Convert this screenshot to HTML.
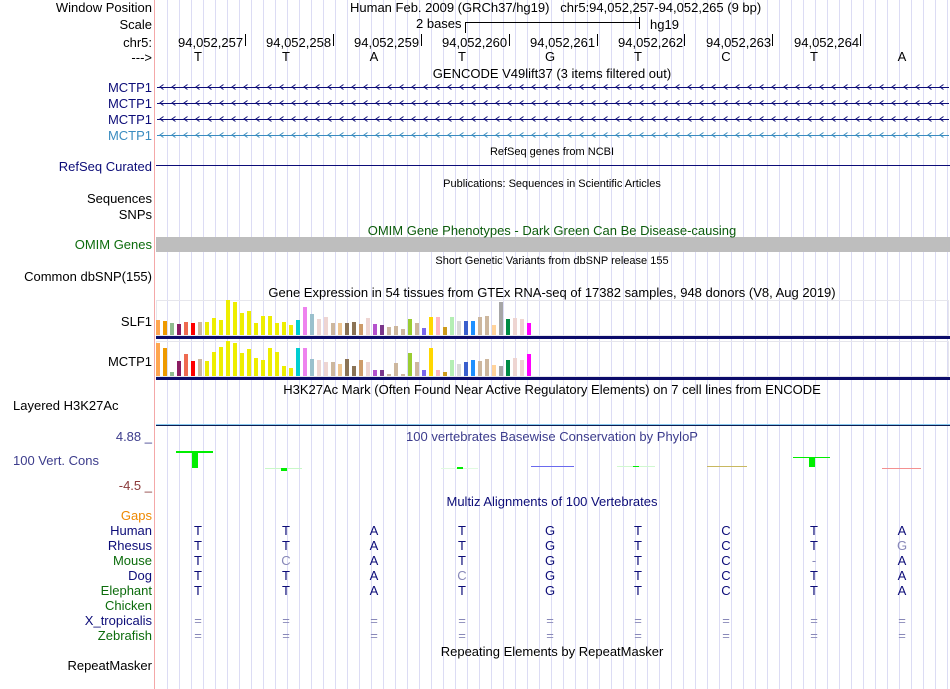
<!DOCTYPE html>
<html><head><meta charset="utf-8"><style>
body{margin:0;width:950px;height:689px;background:#fff;position:relative;overflow:hidden;font-family:"Liberation Sans",sans-serif;font-size:13px;color:#000}
.l{position:absolute;right:798px;white-space:nowrap;text-align:right;line-height:15px}
.t{position:absolute;white-space:nowrap;line-height:15px}
.c{position:absolute;white-space:nowrap;line-height:15px;transform:translateX(-50%)}
svg{position:absolute;left:0;top:0}
</style></head><body>
<svg width="950" height="689">
<defs>
<pattern id="g" x="167" y="0" width="12" height="689" patternUnits="userSpaceOnUse"><rect x="0" y="0" width="1" height="689" fill="#dcdcf4"/></pattern>
<pattern id="ch" x="158" y="79" width="12" height="16" patternUnits="userSpaceOnUse"><path d="M5.5 5.5 L2 8 L5.5 10.5" fill="none" stroke="#0c0c78" stroke-width="1"/></pattern>
<pattern id="ch2" x="158" y="79" width="12" height="16" patternUnits="userSpaceOnUse"><path d="M5.5 5.5 L2 8 L5.5 10.5" fill="none" stroke="#3a8cc0" stroke-width="1"/></pattern>
</defs>
<rect x="156" y="0" width="794" height="689" fill="url(#g)"/>
<rect x="154" y="0" width="1" height="689" fill="#f4a8a8"/>
<rect x="465" y="22" width="1" height="11" fill="#000"/><rect x="465" y="22" width="174" height="1" fill="#000"/><rect x="639" y="17" width="1" height="12" fill="#000"/>
<g fill="#000"><rect x="245" y="34" width="1" height="12"/><rect x="333" y="34" width="1" height="12"/><rect x="421" y="34" width="1" height="12"/><rect x="509" y="34" width="1" height="12"/><rect x="597" y="34" width="1" height="12"/><rect x="684" y="34" width="1" height="12"/><rect x="772" y="34" width="1" height="12"/><rect x="860" y="34" width="1" height="12"/></g>
<rect x="157" y="87" width="792" height="1" fill="#0c0c78"/>
<rect x="157" y="103" width="792" height="1" fill="#0c0c78"/>
<rect x="157" y="119" width="792" height="1" fill="#0c0c78"/>
<rect x="156" y="80" width="794" height="47" fill="url(#ch)"/>
<rect x="157" y="135" width="792" height="1" fill="#3a8cc0"/>
<rect x="156" y="128" width="794" height="14" fill="url(#ch2)"/>
<rect x="156" y="165" width="794" height="1" fill="#0c0c78"/>
<rect x="156" y="237" width="794" height="15" fill="#bebebe"/>
<rect x="156.5" y="300.5" width="792" height="35" fill="none" stroke="#e6e6ec"/>
<rect x="156.5" y="341.5" width="792" height="35" fill="none" stroke="#e6e6ec"/>
<rect x="156" y="336" width="794" height="3" fill="#0c0c6a"/>
<rect x="156" y="377" width="794" height="3" fill="#0c0c6a"/>
<g>
<rect x="156" y="320" width="4" height="15" fill="#FFA54F"/><rect x="163" y="321" width="4" height="14" fill="#EE9A00"/><rect x="170" y="323" width="4" height="12" fill="#8FBC8F"/><rect x="177" y="324" width="4" height="11" fill="#8B1C62"/><rect x="184" y="322" width="4" height="13" fill="#EE6A50"/><rect x="191" y="323" width="4" height="12" fill="#FF0000"/><rect x="198" y="322" width="4" height="13" fill="#CDB79E"/><rect x="205" y="322" width="4" height="13" fill="#EEEE00"/><rect x="212" y="318" width="4" height="17" fill="#EEEE00"/><rect x="219" y="320" width="4" height="15" fill="#EEEE00"/><rect x="226" y="300" width="4" height="35" fill="#EEEE00"/><rect x="233" y="302" width="4" height="33" fill="#EEEE00"/><rect x="240" y="313" width="4" height="22" fill="#EEEE00"/><rect x="247" y="311" width="4" height="24" fill="#EEEE00"/><rect x="254" y="323" width="4" height="12" fill="#EEEE00"/><rect x="261" y="316" width="4" height="19" fill="#EEEE00"/><rect x="268" y="316" width="4" height="19" fill="#EEEE00"/><rect x="275" y="323" width="4" height="12" fill="#EEEE00"/><rect x="282" y="322" width="4" height="13" fill="#EEEE00"/><rect x="289" y="325" width="4" height="10" fill="#EEEE00"/><rect x="296" y="320" width="4" height="15" fill="#00CED1"/><rect x="303" y="307" width="4" height="28" fill="#EE82EE"/><rect x="310" y="314" width="4" height="21" fill="#9AC0CD"/><rect x="317" y="319" width="4" height="16" fill="#EED5D2"/><rect x="324" y="317" width="4" height="18" fill="#EED5D2"/><rect x="331" y="323" width="4" height="12" fill="#CDB79E"/><rect x="338" y="323" width="4" height="12" fill="#EEC591"/><rect x="345" y="323" width="4" height="12" fill="#8B7355"/><rect x="352" y="322" width="4" height="13" fill="#8B7355"/><rect x="359" y="324" width="4" height="11" fill="#CD9B69"/><rect x="366" y="318" width="4" height="17" fill="#EED5D2"/><rect x="373" y="324" width="4" height="11" fill="#B452CD"/><rect x="380" y="325" width="4" height="10" fill="#7A378B"/><rect x="387" y="327" width="4" height="8" fill="#CDB79E"/><rect x="394" y="326" width="4" height="9" fill="#CDB79E"/><rect x="401" y="329" width="4" height="6" fill="#CDB79E"/><rect x="408" y="319" width="4" height="16" fill="#9ACD32"/><rect x="415" y="323" width="4" height="12" fill="#CDB79E"/><rect x="422" y="328" width="4" height="7" fill="#7B68EE"/><rect x="429" y="317" width="4" height="18" fill="#FFD700"/><rect x="436" y="317" width="4" height="18" fill="#FFB6C1"/><rect x="443" y="327" width="4" height="8" fill="#CD9B1D"/><rect x="450" y="317" width="4" height="18" fill="#B4EEB4"/><rect x="457" y="321" width="4" height="14" fill="#D9D9D9"/><rect x="464" y="321" width="4" height="14" fill="#3A5FCD"/><rect x="471" y="321" width="4" height="14" fill="#1E90FF"/><rect x="478" y="317" width="4" height="18" fill="#CDB79E"/><rect x="485" y="316" width="4" height="19" fill="#CDB79E"/><rect x="492" y="325" width="4" height="10" fill="#FFD39B"/><rect x="499" y="302" width="4" height="33" fill="#A6A6A6"/><rect x="506" y="319" width="4" height="16" fill="#008B45"/><rect x="513" y="318" width="4" height="17" fill="#EED5D2"/><rect x="520" y="319" width="4" height="16" fill="#EED5D2"/><rect x="527" y="323" width="4" height="12" fill="#FF00FF"/>
</g>
<g>
<rect x="156" y="343" width="4" height="33" fill="#FFA54F"/><rect x="163" y="348" width="4" height="28" fill="#EE9A00"/><rect x="170" y="372" width="4" height="4" fill="#8FBC8F"/><rect x="177" y="361" width="4" height="15" fill="#8B1C62"/><rect x="184" y="354" width="4" height="22" fill="#EE6A50"/><rect x="191" y="361" width="4" height="15" fill="#FF0000"/><rect x="198" y="359" width="4" height="17" fill="#CDB79E"/><rect x="205" y="361" width="4" height="15" fill="#EEEE00"/><rect x="212" y="352" width="4" height="24" fill="#EEEE00"/><rect x="219" y="347" width="4" height="29" fill="#EEEE00"/><rect x="226" y="341" width="4" height="35" fill="#EEEE00"/><rect x="233" y="343" width="4" height="33" fill="#EEEE00"/><rect x="240" y="353" width="4" height="23" fill="#EEEE00"/><rect x="247" y="349" width="4" height="27" fill="#EEEE00"/><rect x="254" y="358" width="4" height="18" fill="#EEEE00"/><rect x="261" y="360" width="4" height="16" fill="#EEEE00"/><rect x="268" y="348" width="4" height="28" fill="#EEEE00"/><rect x="275" y="352" width="4" height="24" fill="#EEEE00"/><rect x="282" y="366" width="4" height="10" fill="#EEEE00"/><rect x="289" y="368" width="4" height="8" fill="#EEEE00"/><rect x="296" y="348" width="4" height="28" fill="#00CED1"/><rect x="303" y="348" width="4" height="28" fill="#EE82EE"/><rect x="310" y="359" width="4" height="17" fill="#9AC0CD"/><rect x="317" y="360" width="4" height="16" fill="#EED5D2"/><rect x="324" y="362" width="4" height="14" fill="#EED5D2"/><rect x="331" y="362" width="4" height="14" fill="#CDB79E"/><rect x="338" y="364" width="4" height="12" fill="#EEC591"/><rect x="345" y="359" width="4" height="17" fill="#8B7355"/><rect x="352" y="366" width="4" height="10" fill="#8B7355"/><rect x="359" y="360" width="4" height="16" fill="#CD9B69"/><rect x="366" y="362" width="4" height="14" fill="#EED5D2"/><rect x="373" y="370" width="4" height="6" fill="#B452CD"/><rect x="380" y="370" width="4" height="6" fill="#7A378B"/><rect x="387" y="374" width="4" height="2" fill="#CDB79E"/><rect x="394" y="363" width="4" height="13" fill="#CDB79E"/><rect x="401" y="374" width="4" height="2" fill="#CDB79E"/><rect x="408" y="353" width="4" height="23" fill="#9ACD32"/><rect x="415" y="362" width="4" height="14" fill="#CDB79E"/><rect x="422" y="370" width="4" height="6" fill="#7B68EE"/><rect x="429" y="348" width="4" height="28" fill="#FFD700"/><rect x="436" y="370" width="4" height="6" fill="#FFB6C1"/><rect x="443" y="372" width="4" height="4" fill="#CD9B1D"/><rect x="450" y="360" width="4" height="16" fill="#B4EEB4"/><rect x="457" y="364" width="4" height="12" fill="#D9D9D9"/><rect x="464" y="362" width="4" height="14" fill="#3A5FCD"/><rect x="471" y="360" width="4" height="16" fill="#1E90FF"/><rect x="478" y="361" width="4" height="15" fill="#CDB79E"/><rect x="485" y="359" width="4" height="17" fill="#CDB79E"/><rect x="492" y="365" width="4" height="11" fill="#FFD39B"/><rect x="499" y="366" width="4" height="10" fill="#A6A6A6"/><rect x="506" y="360" width="4" height="16" fill="#008B45"/><rect x="513" y="358" width="4" height="18" fill="#EED5D2"/><rect x="520" y="360" width="4" height="16" fill="#EED5D2"/><rect x="527" y="354" width="4" height="22" fill="#FF00FF"/>
</g>
<rect x="156" y="424" width="794" height="1" fill="#87c8ee"/>
<rect x="156" y="425" width="794" height="1" fill="#0c1c50"/>
<rect x="176" y="451" width="37" height="2" fill="#00ee00"/><rect x="192" y="452" width="6" height="16" fill="#00ee00"/>
<rect x="265" y="468" width="37" height="1" fill="#c8f8c8"/><rect x="281" y="468" width="6" height="3" fill="#00ee00"/>
<rect x="441" y="468" width="37" height="1" fill="#e0fae0"/><rect x="457" y="467" width="6" height="2" fill="#00ee00"/>
<rect x="531" y="466" width="43" height="1" fill="#6a6aee"/>
<rect x="617" y="466" width="38" height="1" fill="#d0f8d0"/><rect x="633" y="466" width="6" height="1" fill="#00ee00"/>
<rect x="707" y="466" width="40" height="1" fill="#c8b860"/>
<rect x="793" y="457" width="37" height="1" fill="#00ee00"/><rect x="809" y="457" width="6" height="10" fill="#00ee00"/>
<rect x="882" y="468" width="39" height="1" fill="#f49090"/>
</svg>

<div class="l" style="top:0">Window Position</div>
<div class="l" style="top:17px">Scale</div>
<div class="l" style="top:35px">chr5:</div>
<div class="l" style="top:50px">---&gt;</div>
<div class="t" style="left:350px;top:0">Human Feb. 2009 (GRCh37/hg19) &nbsp; chr5:94,052,257-94,052,265 (9 bp)</div>
<div class="t" style="left:416px;top:16px">2 bases</div>
<div class="t" style="left:650px;top:17px">hg19</div>
<div class="t" style="left:178px;top:35px">94,052,257</div>
<div class="t" style="left:266px;top:35px">94,052,258</div>
<div class="t" style="left:354px;top:35px">94,052,259</div>
<div class="t" style="left:442px;top:35px">94,052,260</div>
<div class="t" style="left:530px;top:35px">94,052,261</div>
<div class="t" style="left:618px;top:35px">94,052,262</div>
<div class="t" style="left:706px;top:35px">94,052,263</div>
<div class="t" style="left:794px;top:35px">94,052,264</div>
<div class="c" style="left:198px;top:49px">T</div><div class="c" style="left:286px;top:49px">T</div><div class="c" style="left:374px;top:49px">A</div><div class="c" style="left:462px;top:49px">T</div><div class="c" style="left:550px;top:49px">G</div><div class="c" style="left:638px;top:49px">T</div><div class="c" style="left:726px;top:49px">C</div><div class="c" style="left:814px;top:49px">T</div><div class="c" style="left:902px;top:49px">A</div>
<div class="c" style="left:552px;top:66px">GENCODE V49lift37 (3 items filtered out)</div>
<div class="l" style="top:80px;color:#0c0c78">MCTP1</div>
<div class="l" style="top:96px;color:#0c0c78">MCTP1</div>
<div class="l" style="top:112px;color:#0c0c78">MCTP1</div>
<div class="l" style="top:128px;color:#3a8cc0">MCTP1</div>
<div class="c" style="left:552px;top:145px;font-size:11px">RefSeq genes from NCBI</div>
<div class="l" style="top:159px;color:#0c0c78">RefSeq Curated</div>
<div class="c" style="left:552px;top:177px;font-size:11px">Publications: Sequences in Scientific Articles</div>
<div class="l" style="top:191px">Sequences</div>
<div class="l" style="top:207px">SNPs</div>
<div class="c" style="left:552px;top:223px;color:#0c5c0c">OMIM Gene Phenotypes - Dark Green Can Be Disease-causing</div>
<div class="l" style="top:237px;color:#0c6c0c">OMIM Genes</div>
<div class="c" style="left:552px;top:254px;font-size:11px">Short Genetic Variants from dbSNP release 155</div>
<div class="l" style="top:269px">Common dbSNP(155)</div>
<div class="c" style="left:552px;top:285px">Gene Expression in 54 tissues from GTEx RNA-seq of 17382 samples, 948 donors (V8, Aug 2019)</div>
<div class="l" style="top:314px">SLF1</div>
<div class="l" style="top:354px">MCTP1</div>
<div class="c" style="left:552px;top:382px">H3K27Ac Mark (Often Found Near Active Regulatory Elements) on 7 cell lines from ENCODE</div>
<div class="t" style="left:13px;top:398px">Layered H3K27Ac</div>
<div class="l" style="top:429px;color:#3c3c8c">4.88 _</div>
<div class="c" style="left:552px;top:429px;color:#3c3c8c">100 vertebrates Basewise Conservation by PhyloP</div>
<div class="t" style="left:13px;top:453px;color:#3c3c8c">100 Vert. Cons</div>
<div class="l" style="top:478px;color:#8b3a3a">-4.5 _</div>
<div class="c" style="left:552px;top:494px;color:#0c0c78">Multiz Alignments of 100 Vertebrates</div>
<div class="l" style="top:508px;color:#ee8800">Gaps</div>
<div class="l" style="top:523px;color:#0c0c78">Human</div>
<div class="l" style="top:538px;color:#0c0c78">Rhesus</div>
<div class="l" style="top:553px;color:#0c6c0c">Mouse</div>
<div class="l" style="top:568px;color:#0c0c78">Dog</div>
<div class="l" style="top:583px;color:#0c6c0c">Elephant</div>
<div class="l" style="top:598px;color:#0c6c0c">Chicken</div>
<div class="l" style="top:613px;color:#0c0c78">X_tropicalis</div>
<div class="l" style="top:628px;color:#0c6c0c">Zebrafish</div>
<div style="color:#0c0c78">
<div class="c" style="left:198px;top:523px">T</div><div class="c" style="left:286px;top:523px">T</div><div class="c" style="left:374px;top:523px">A</div><div class="c" style="left:462px;top:523px">T</div><div class="c" style="left:550px;top:523px">G</div><div class="c" style="left:638px;top:523px">T</div><div class="c" style="left:726px;top:523px">C</div><div class="c" style="left:814px;top:523px">T</div><div class="c" style="left:902px;top:523px">A</div>
<div class="c" style="left:198px;top:538px">T</div><div class="c" style="left:286px;top:538px">T</div><div class="c" style="left:374px;top:538px">A</div><div class="c" style="left:462px;top:538px">T</div><div class="c" style="left:550px;top:538px">G</div><div class="c" style="left:638px;top:538px">T</div><div class="c" style="left:726px;top:538px">C</div><div class="c" style="left:814px;top:538px">T</div><div class="c" style="left:902px;top:538px;color:#8888b8">G</div>
<div class="c" style="left:198px;top:553px">T</div><div class="c" style="left:286px;top:553px;color:#8888b8">C</div><div class="c" style="left:374px;top:553px">A</div><div class="c" style="left:462px;top:553px">T</div><div class="c" style="left:550px;top:553px">G</div><div class="c" style="left:638px;top:553px">T</div><div class="c" style="left:726px;top:553px">C</div><div class="c" style="left:814px;top:553px;color:#8888b8">-</div><div class="c" style="left:902px;top:553px">A</div>
<div class="c" style="left:198px;top:568px">T</div><div class="c" style="left:286px;top:568px">T</div><div class="c" style="left:374px;top:568px">A</div><div class="c" style="left:462px;top:568px;color:#8888b8">C</div><div class="c" style="left:550px;top:568px">G</div><div class="c" style="left:638px;top:568px">T</div><div class="c" style="left:726px;top:568px">C</div><div class="c" style="left:814px;top:568px">T</div><div class="c" style="left:902px;top:568px">A</div>
<div class="c" style="left:198px;top:583px">T</div><div class="c" style="left:286px;top:583px">T</div><div class="c" style="left:374px;top:583px">A</div><div class="c" style="left:462px;top:583px">T</div><div class="c" style="left:550px;top:583px">G</div><div class="c" style="left:638px;top:583px">T</div><div class="c" style="left:726px;top:583px">C</div><div class="c" style="left:814px;top:583px">T</div><div class="c" style="left:902px;top:583px">A</div>
</div>
<div style="color:#8888b8">
<div class="c" style="left:198px;top:613px">=</div><div class="c" style="left:286px;top:613px">=</div><div class="c" style="left:374px;top:613px">=</div><div class="c" style="left:462px;top:613px">=</div><div class="c" style="left:550px;top:613px">=</div><div class="c" style="left:638px;top:613px">=</div><div class="c" style="left:726px;top:613px">=</div><div class="c" style="left:814px;top:613px">=</div><div class="c" style="left:902px;top:613px">=</div>
<div class="c" style="left:198px;top:628px">=</div><div class="c" style="left:286px;top:628px">=</div><div class="c" style="left:374px;top:628px">=</div><div class="c" style="left:462px;top:628px">=</div><div class="c" style="left:550px;top:628px">=</div><div class="c" style="left:638px;top:628px">=</div><div class="c" style="left:726px;top:628px">=</div><div class="c" style="left:814px;top:628px">=</div><div class="c" style="left:902px;top:628px">=</div>
</div>
<div class="c" style="left:552px;top:644px">Repeating Elements by RepeatMasker</div>
<div class="l" style="top:658px">RepeatMasker</div>
</body></html>
